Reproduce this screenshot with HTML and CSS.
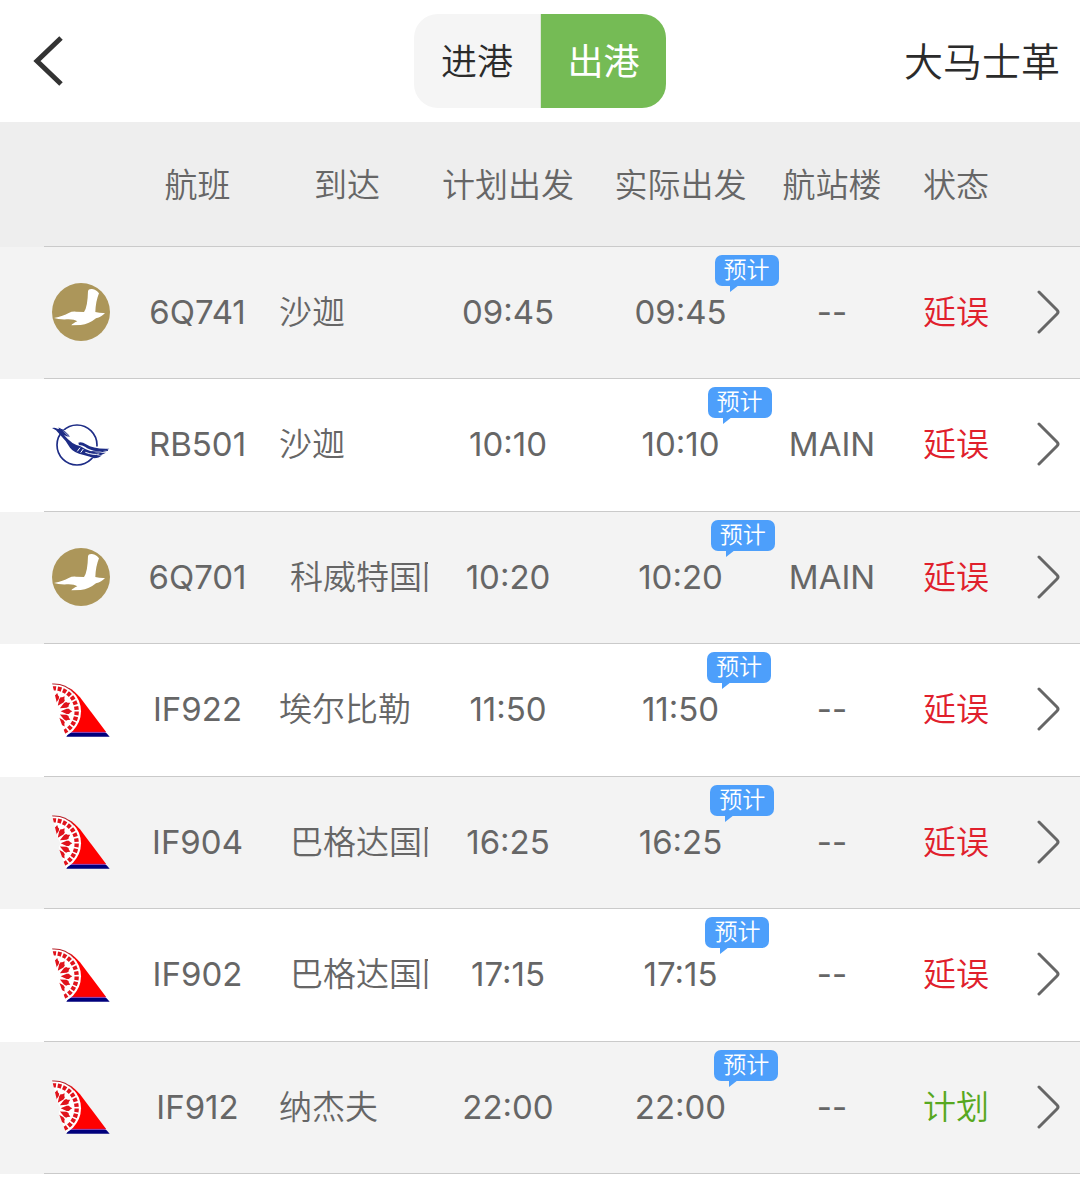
FILE: index.html
```html
<!DOCTYPE html>
<html lang="zh-CN">

<head>
    <meta charset="utf-8">
    <meta name="viewport" content="width=device-width, initial-scale=1">
    <title>大马士革</title>
    <link rel="stylesheet" href="styles.css">
</head>

<body>
    <!-- shared icons -->
    <svg class="sprite" aria-hidden="true">
        <symbol id="seagull" viewBox="0 0 174 174">
            <circle cx="87" cy="87" r="87" fill="#ac965a" />
            <path fill="#fff" d="M6 105 Q34 99 50 90 Q60 85 72 86 L96 87 Q107 72 108 24 Q109 17 120 18 Q134 20 141 31 Q131 55 130 87 Q145 91 159 90 Q149 102 132 106 Q112 123 86 126 L58 127 Q61 122 76 115 Q66 108 45 109 Q20 110 6 105 Z" />
        </symbol>
        <symbol id="bird" viewBox="0 0 174 130">
            <circle cx="75" cy="65" r="60" fill="none" stroke="#1d2c86" stroke-width="5" />
            <path fill="#fff" d="M22 18 L38 20 L60 42 L80 55 L100 57 L122 68 L172 74 L150 98 L112 104 L70 94 L40 60 Z" />
            <path fill="#1d2c86" d="M0 14 Q8 11 16 16 L30 18 Q44 37 54 41 Q43 40 36 35 Q60 64 84 68 Q120 92 162 88 Q150 96 134 96 Q145 98 150 95 Q141 105 126 105 Q112 99 95 95 Q65 88 54 73 Q40 49 24 34 L12 21 Z" />
            <path fill="#1d2c86" d="M79 58 Q89 54 102 63 Q125 78 172 76 Q160 84 138 84 Q110 80 99 70 Q91 65 81 65 Z" />
            <path fill="none" stroke="#1d2c86" stroke-width="3" d="M20 14 Q35 18 52 38 M118 85 Q145 89 168 81" />
            <path fill="none" stroke="#fff" stroke-width="3" d="M76 84 l8 -11 M86 88 l8 -11 M100 87 Q125 96 142 92" />
        </symbol>
        <symbol id="fan" viewBox="0 0 174 162">
            <defs>
                <path id="petal" fill="#e0131c" d="M26 85 L44 77 L51 77 L54 81 L61 85 L54 89 L51 93 L44 93 Z" />
                <clipPath id="sector">
                    <path d="M0 0 H174 V162 H43 L20 98 Q30 85 17 70 Z" />
                </clipPath>
            </defs>
            <path fill="#f00" d="M50 14 Q66 22 84 43 L163 148 H52 Z" />
            <path fill="#00007c" d="M50 150 H163 L173 161 H43 Z" />
            <path fill="none" stroke="#7a2bab" stroke-width="3" d="M55 148 H161" />
            <g clip-path="url(#sector)">
                <circle cx="5" cy="85" r="82" fill="#fff" />
                <circle cx="5" cy="85" r="82" fill="none" stroke="#b8232c" stroke-width="3" stroke-dasharray="75 600" transform="rotate(-94 5 85)" />
                <circle cx="5" cy="85" r="69" fill="none" stroke="#e0131c" stroke-width="13" stroke-dasharray="11 5" transform="rotate(-93 5 85)" />
                <use href="#petal" />
                <use href="#petal" transform="rotate(-27 5 85)" />
                <use href="#petal" transform="rotate(-54 5 85)" />
                <use href="#petal" transform="rotate(-79 5 85)" />
                <use href="#petal" transform="rotate(27 5 85)" />
                <use href="#petal" transform="rotate(54 5 85)" />
            </g>
        </symbol>
        <symbol id="arrow" viewBox="0 0 24 46">
            <path d="M2 3 L20 21 Q22 23 20 25 L2 43" fill="none" stroke="#666" stroke-width="3" stroke-linecap="round" />
        </symbol>
    </svg>

    <header class="top-bar">
        <button class="back" type="button" aria-label="返回">
            <svg width="32" height="50" viewBox="0 0 32 50">
                <path d="M29 2 L5 25 L29 48" fill="none" stroke="#333" stroke-width="5" />
            </svg>
        </button>
        <div class="tabs">
            <button class="tab" type="button">进港</button>
            <button class="tab active" type="button">出港</button>
        </div>
        <h1 class="city">大马士革</h1>
    </header>

    <table class="flights">
        <colgroup>
            <col class="col-logo">
            <col class="col-flight">
            <col class="col-dest">
            <col class="col-plan">
            <col class="col-actual">
            <col class="col-terminal">
            <col class="col-status">
            <col class="col-more">
        </colgroup>
        <thead>
            <tr>
                <th class="logo"></th>
                <th>航班</th>
                <th>到达</th>
                <th>计划出发</th>
                <th>实际出发</th>
                <th>航站楼</th>
                <th>状态</th>
                <th></th>
            </tr>
        </thead>
        <tbody>
            <tr>
                <td class="logo"><svg><use href="#seagull" /></svg></td>
                <td>6Q741</td>
                <td class="dest"><div>沙迦</div></td>
                <td>09:45</td>
                <td><span class="time">09:45<span class="badge">预计</span></span></td>
                <td>--</td>
                <td class="late">延误</td>
                <td class="more"><a href="#" aria-label="6Q741"><svg><use href="#arrow" /></svg></a></td>
            </tr>
            <tr>
                <td class="logo"><svg><use href="#bird" /></svg></td>
                <td>RB501</td>
                <td class="dest"><div>沙迦</div></td>
                <td>10:10</td>
                <td><span class="time">10:10<span class="badge">预计</span></span></td>
                <td>MAIN</td>
                <td class="late">延误</td>
                <td class="more"><a href="#" aria-label="RB501"><svg><use href="#arrow" /></svg></a></td>
            </tr>
            <tr>
                <td class="logo"><svg><use href="#seagull" /></svg></td>
                <td>6Q701</td>
                <td class="dest"><div class="scroll">科威特国际</div></td>
                <td>10:20</td>
                <td><span class="time">10:20<span class="badge">预计</span></span></td>
                <td>MAIN</td>
                <td class="late">延误</td>
                <td class="more"><a href="#" aria-label="6Q701"><svg><use href="#arrow" /></svg></a></td>
            </tr>
            <tr>
                <td class="logo"><svg><use href="#fan" /></svg></td>
                <td>IF922</td>
                <td class="dest"><div>埃尔比勒</div></td>
                <td>11:50</td>
                <td><span class="time">11:50<span class="badge">预计</span></span></td>
                <td>--</td>
                <td class="late">延误</td>
                <td class="more"><a href="#" aria-label="IF922"><svg><use href="#arrow" /></svg></a></td>
            </tr>
            <tr>
                <td class="logo"><svg><use href="#fan" /></svg></td>
                <td>IF904</td>
                <td class="dest"><div class="scroll">巴格达国际</div></td>
                <td>16:25</td>
                <td><span class="time">16:25<span class="badge">预计</span></span></td>
                <td>--</td>
                <td class="late">延误</td>
                <td class="more"><a href="#" aria-label="IF904"><svg><use href="#arrow" /></svg></a></td>
            </tr>
            <tr>
                <td class="logo"><svg><use href="#fan" /></svg></td>
                <td>IF902</td>
                <td class="dest"><div class="scroll">巴格达国际</div></td>
                <td>17:15</td>
                <td><span class="time">17:15<span class="badge">预计</span></span></td>
                <td>--</td>
                <td class="late">延误</td>
                <td class="more"><a href="#" aria-label="IF902"><svg><use href="#arrow" /></svg></a></td>
            </tr>
            <tr>
                <td class="logo"><svg><use href="#fan" /></svg></td>
                <td>IF912</td>
                <td class="dest"><div>纳杰夫</div></td>
                <td>22:00</td>
                <td><span class="time">22:00<span class="badge">预计</span></span></td>
                <td>--</td>
                <td class="plan">计划</td>
                <td class="more"><a href="#" aria-label="IF912"><svg><use href="#arrow" /></svg></a></td>
            </tr>
        </tbody>
    </table>
</body>

</html>
```
FILE: styles.css
```css
* {
    box-sizing: border-box;
}

body {
    margin: 0;
    background: #fff;
    color: #666;
    font-family: Inter, "Noto Sans CJK SC", sans-serif;
    font-size: 33px;
    font-weight: 350;
    line-height: 40px;
}

button {
    border: 0;
    padding: 0;
    background: none;
    font: inherit;
    color: inherit;
    cursor: pointer;
}

svg {
    display: block;
}

.sprite {
    position: absolute;
    width: 0;
    height: 0;
}

/* top bar */
.top-bar {
    display: grid;
    grid-template-columns: 1fr auto 1fr;
    align-items: center;
    padding: 14px 20px;
    color: #2b2b2b;
}

.back {
    justify-self: start;
    margin-left: 12px;
}

.tabs {
    display: flex;
    border-radius: 24px;
    overflow: hidden;
    background: #f5f5f5;
}

.tab {
    width: 126px;
    height: 94px;
    padding-top: 2px;
    font-size: 36px;
}

.tab.active {
    background: #75bb55;
    color: #fff;
    font-weight: 400;
    border-left: 1px solid #dfe8da;
}

.city {
    justify-self: end;
    margin: 0;
    padding-top: 2px;
    font-size: 39px;
    font-weight: 350;
}

/* flight list */
.flights {
    width: 100%;
    table-layout: fixed;
    border-collapse: separate;
    border-spacing: 0;
}

.col-logo {
    width: 131px;
}

.col-flight {
    width: 133px;
}

.col-dest {
    width: 166px;
}

.col-plan {
    width: 156px;
}

.col-actual {
    width: 189px;
}

.col-terminal {
    width: 114px;
}

.col-status {
    width: 134px;
}

.col-more {
    width: 57px;
}

th,
td {
    padding: 0;
    text-align: center;
    white-space: nowrap;
    border-bottom: 1px solid #cacaca;
}

th {
    height: 125px;
    padding-top: 2px;
    font-weight: 350;
    background-color: #eee;
}

td {
    height: 133px;
    padding-bottom: 2px;
    font-weight: 400;
}

tbody tr:nth-child(odd) td {
    height: 132px;
    background-color: #f3f3f3;
}

/* the divider starts to the right of the screen edge */
.flights .logo {
    padding-left: 52px;
    border-bottom: 0;
    background-image: linear-gradient(#cacaca, #cacaca);
    background-repeat: no-repeat;
    background-position: 44px 100%;
    background-size: 100% 1px;
}

.logo svg {
    width: 58px;
    height: 58px;
}

.dest,
.late,
.plan {
    font-weight: 350;
}

.dest div {
    margin: 0 2px 0 15px;
    overflow: hidden;
    text-align: left;
}

.dest .scroll {
    padding-left: 11px;
}

.time {
    display: inline-block;
    position: relative;
}

.badge {
    position: absolute;
    top: -37px;
    left: calc(100% - 12px);
    padding: 0 9px;
    border-radius: 7px;
    background: #4d9ffb;
    color: #fff;
    font-size: 23px;
    font-weight: 350;
    line-height: 31px;
}

.badge::after {
    content: "";
    position: absolute;
    top: 30px;
    left: 15px;
    border-top: 7px solid #4d9ffb;
    border-right: 9px solid transparent;
}

.late {
    color: #e0202c;
}

.plan {
    color: #57a821;
}

.more a {
    display: block;
    margin-left: 14px;
}

.more svg {
    width: 24px;
    height: 46px;
}
```
